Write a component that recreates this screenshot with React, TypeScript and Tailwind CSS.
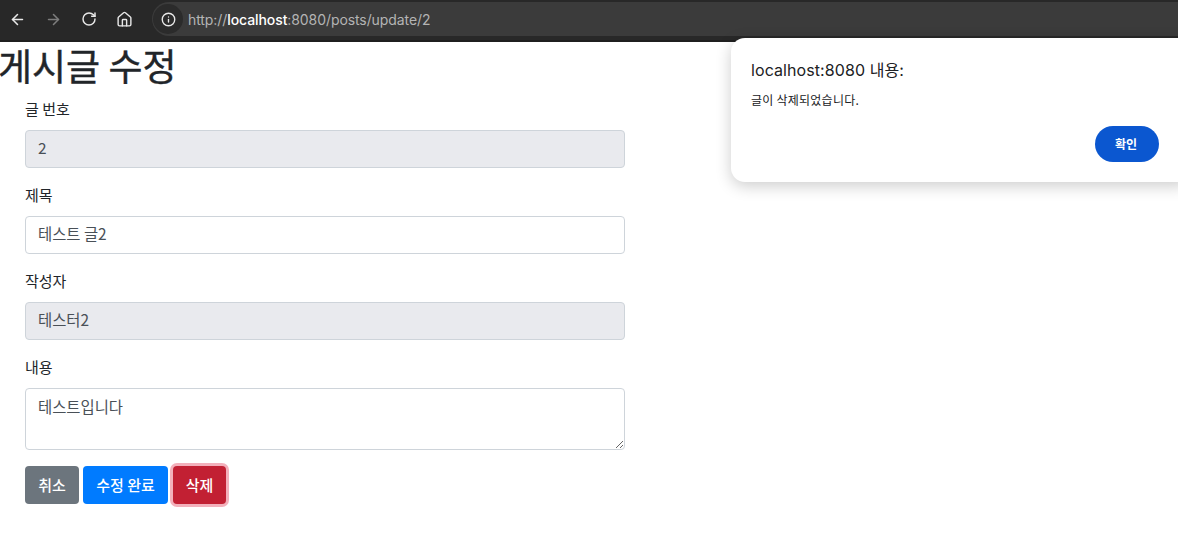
import { ArrowLeft, ArrowRight, RotateCw, Home, Info } from "lucide-react";

const font = "[font-family:'Noto_Sans_CJK_KR','Noto_Sans',sans-serif]";

function Toolbar() {
  return (
    <div className="h-[42px] bg-[#282828] flex items-center border-b-2 border-[#1f1f1f] pb-[2px]">
      <div className="w-[152px] flex items-center shrink-0">
        <ArrowLeft size={17} strokeWidth={2.2} className="ml-[9px] text-[#e8e8e8]" />
        <ArrowRight size={17} strokeWidth={2.2} className="ml-[19px] text-[#7d7d7d]" />
        <RotateCw size={16} strokeWidth={2.2} className="ml-[19px] text-[#e8e8e8]" />
        <Home size={17} strokeWidth={2} className="ml-[19px] text-[#e8e8e8]" />
      </div>
      <div className="flex-1 h-[34px] rounded-l-[17px] bg-[#3b3b3b] flex items-center">
        <div className="w-[30px] h-[30px] ml-[1px] rounded-full bg-[#2b2b2b] flex items-center justify-center">
          <Info size={15} strokeWidth={2.2} className="text-[#e8e8e8]" />
        </div>
        <div className="ml-[5px] text-[14px] tracking-[-0.006em] text-[#b4b4b4] [font-family:'Inter',sans-serif]">
          http://<span className="text-white font-medium">localhost</span>:8080/posts/update/2
        </div>
      </div>
    </div>
  );
}

function Field({ label, children }: { label: string; children: React.ReactNode }) {
  return (
    <div className="mb-4">
      <label className="block mb-2 pb-[2px] text-[15px] leading-[22px] text-[#212529]">{label}</label>
      {children}
    </div>
  );
}

export default function App() {
  return (
    <div className={`relative h-[552px] w-[1178px] overflow-hidden bg-white ${font}`}>
      <Toolbar />
      <h1 className="mb-2 pb-[2px] text-[37px] leading-[46px] font-normal [-webkit-text-stroke:0.4px_#212529] text-[#212529] -ml-[2px]">게시글 수정</h1>
      <form className="w-[600px] ml-[25px]">
        <Field label="글 번호">
          <div className="h-[38px] px-3 pb-[2px] flex items-center text-[15.4px] text-[#495057] bg-[#e9eaee] border border-[#ced4da] rounded">2</div>
        </Field>
        <Field label="제목">
          <div className="h-[38px] px-3 pb-[2px] flex items-center text-[15.4px] text-[#495057] bg-white border border-[#ced4da] rounded">테스트 글2</div>
        </Field>
        <Field label="작성자">
          <div className="h-[38px] px-3 pb-[2px] flex items-center text-[15.4px] text-[#495057] bg-[#e9eaee] border border-[#ced4da] rounded">테스터2</div>
        </Field>
        <Field label="내용">
          <textarea
            readOnly
            value="테스트입니다"
            className="block w-full h-[62px] px-3 py-[5px] text-[15.4px] leading-6 text-[#495057] bg-white border border-[#ced4da] rounded outline-none"
          />
        </Field>
        <div className="flex items-center">
          <button type="button" className="h-[38px] w-[54px] rounded bg-[#6c757d] text-white text-[15px] font-medium">취소</button>
          <button type="button" className="h-[38px] w-[85px] ml-1 rounded bg-[#007bff] text-white text-[15px] font-medium">수정 완료</button>
          <button type="button" className="h-[38px] w-[53px] ml-[5px] rounded bg-[#c22033] text-white text-[15px] font-medium ring-[3px] ring-[#f3b0bb]">삭제</button>
        </div>
      </form>
      {/* alert dialog sits over the page */}
      <div className="absolute left-[731px] top-[38px] w-[460px] h-[144px] rounded-[14px] bg-white shadow-[0_4px_16px_rgba(0,0,0,0.2)] pl-[20px] pt-[21px]">
        <div className="text-[16px] tracking-[0.005em] leading-[22px] text-[#202124] [font-family:'Inter','Noto_Sans_CJK_KR',sans-serif]">localhost:8080 내용:</div>
        <div className="mt-[11px] text-[12px] tracking-[0.02em] leading-4 text-[#202124]">글이 삭제되었습니다.</div>
        <button type="button" className="absolute left-[364px] top-[88px] w-[64px] h-[36px] pr-[2px] rounded-full bg-[#0b57d0] text-white text-[12px] font-bold">확인</button>
      </div>
    </div>
  );
}
